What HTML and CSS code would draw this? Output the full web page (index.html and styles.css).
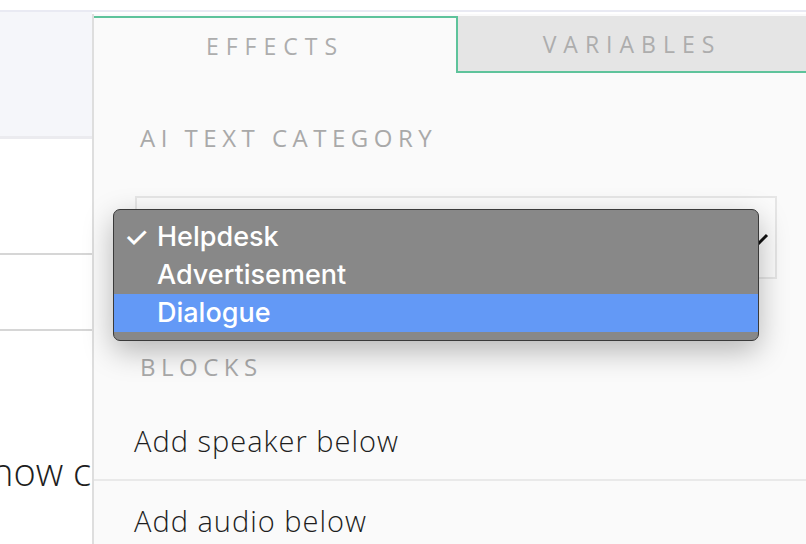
FILE: index.html
```html
<!DOCTYPE html>
<html lang="en">
<head>
    <meta charset="UTF-8">
    <meta name="viewport" content="width=device-width, initial-scale=1.0">
    <link rel="stylesheet" href="styles.css">
</head>
<body>
    <div class="topline"></div>
    <div class="main">
        <aside class="left">
            <div class="left-head"></div>
            <div class="left-row"></div>
            <div class="left-row short"></div>
            <p class="left-text">how close</p>
        </aside>

        <section class="panel">
            <div class="tabs">
                <div class="tab active">EFFECTS</div>
                <div class="tab">VARIABLES</div>
            </div>

            <h3 class="label first">AI TEXT CATEGORY</h3>
            <div class="select-wrap">
                <div class="select">
                    <svg class="chevron" width="24" height="14" viewBox="0 0 24 14">
                        <polyline points="2,2 12,12 22,2" fill="none" stroke="#111" stroke-width="3"/>
                    </svg>
                </div>
                <ul class="menu">
                    <li><span class="check">✓</span>Helpdesk</li>
                    <li>Advertisement</li>
                    <li class="selected">Dialogue</li>
                </ul>
            </div>

            <h3 class="label">BLOCKS</h3>
            <div class="item">Add speaker below</div>
            <div class="item">Add audio below</div>
        </section>
    </div>
</body>
</html>
```

FILE: styles.css
```css
body {
    margin: 0;
    padding-top: 10px;
    background: #fff;
    font-family: 'Open Sans', 'DejaVu Sans', sans-serif;
    overflow: hidden;
    height: 534px;
}
.topline {
    height: 2px;
    background: #e9eaf3;
}
.main {
    display: flex;
    height: 532px;
}
.left {
    width: 92px;
    flex-shrink: 0;
    overflow: hidden;
}
.left-head {
    height: 124px;
    background: #f5f6fa;
    border-bottom: 3px solid #ebebef;
}
.left-row {
    height: 114px;
    border-bottom: 2px solid #d6d6d6;
}
.left-row.short {
    height: 74px;
}
.left-text {
    margin: 120px 0 0 -9px;
    white-space: nowrap;
    font-size: 38px;
    font-weight: 300;
    line-height: 40px;
    color: #1e1e1e;
}
.panel {
    flex: 1;
    margin-top: 2px;
    padding-top: 2px;
    background: #fafafa;
    border-left: 2px solid #dedede;
}
.tabs {
    display: grid;
    grid-template-columns: 364px 1fr;
    height: 57px;
}
.tab {
    display: flex;
    align-items: center;
    justify-content: center;
    font-size: 23px;
    letter-spacing: 7px;
    color: #adadad;
    background: #e5e5e5;
    border-bottom: 2px solid #5ec39b;
}
.tab.active {
    background: #fafafa;
    border-bottom: none;
    border-top: 2px solid #5ec39b;
    border-right: 2px solid #5ec39b;
}
.label {
    margin: 0 0 0 46px;
    font-size: 24px;
    font-weight: 400;
    letter-spacing: 5.5px;
    color: #a9a9a9;
    line-height: 30px;
}
.label.first {
    margin-top: 50px;
    margin-bottom: 43px;
}
.select-wrap {
    position: relative;
    margin: 0 29px 0 41px;
}
.select {
    height: 79px;
    background: #fbfbfb;
    border: 2px solid #e6e6e6;
    position: relative;
}
.chevron {
    position: absolute;
    right: 6px;
    top: 35px;
}
.menu {
    position: absolute;
    left: -22px;
    top: 13px;
    width: 644px;
    margin: 0;
    padding: 8px 0;
    list-style: none;
    background: #888;
    border: 1px solid #3a3a3a;
    border-radius: 7px;
    box-shadow: 0 10px 30px rgba(0, 0, 0, 0.28);
    font-family: 'Inter', 'Liberation Sans', sans-serif;
    font-weight: 500;
    font-size: 27px;
    color: #fff;
}
.menu li {
    position: relative;
    height: 38px;
    line-height: 38px;
    padding-left: 43px;
}
.menu li.selected {
    background: #6399f6;
}
.check {
    position: absolute;
    left: 10px;
    font-size: 28px;
}
.item {
    height: 78px;
    display: flex;
    align-items: center;
    padding-left: 40px;
    font-size: 29px;
    font-weight: 300;
    letter-spacing: 1px;
    color: #1e1e1e;
    border-bottom: 2px solid #e9e9e9;
}
.select-wrap + .label {
    margin-top: 73px;
    margin-bottom: 19px;
}
```
